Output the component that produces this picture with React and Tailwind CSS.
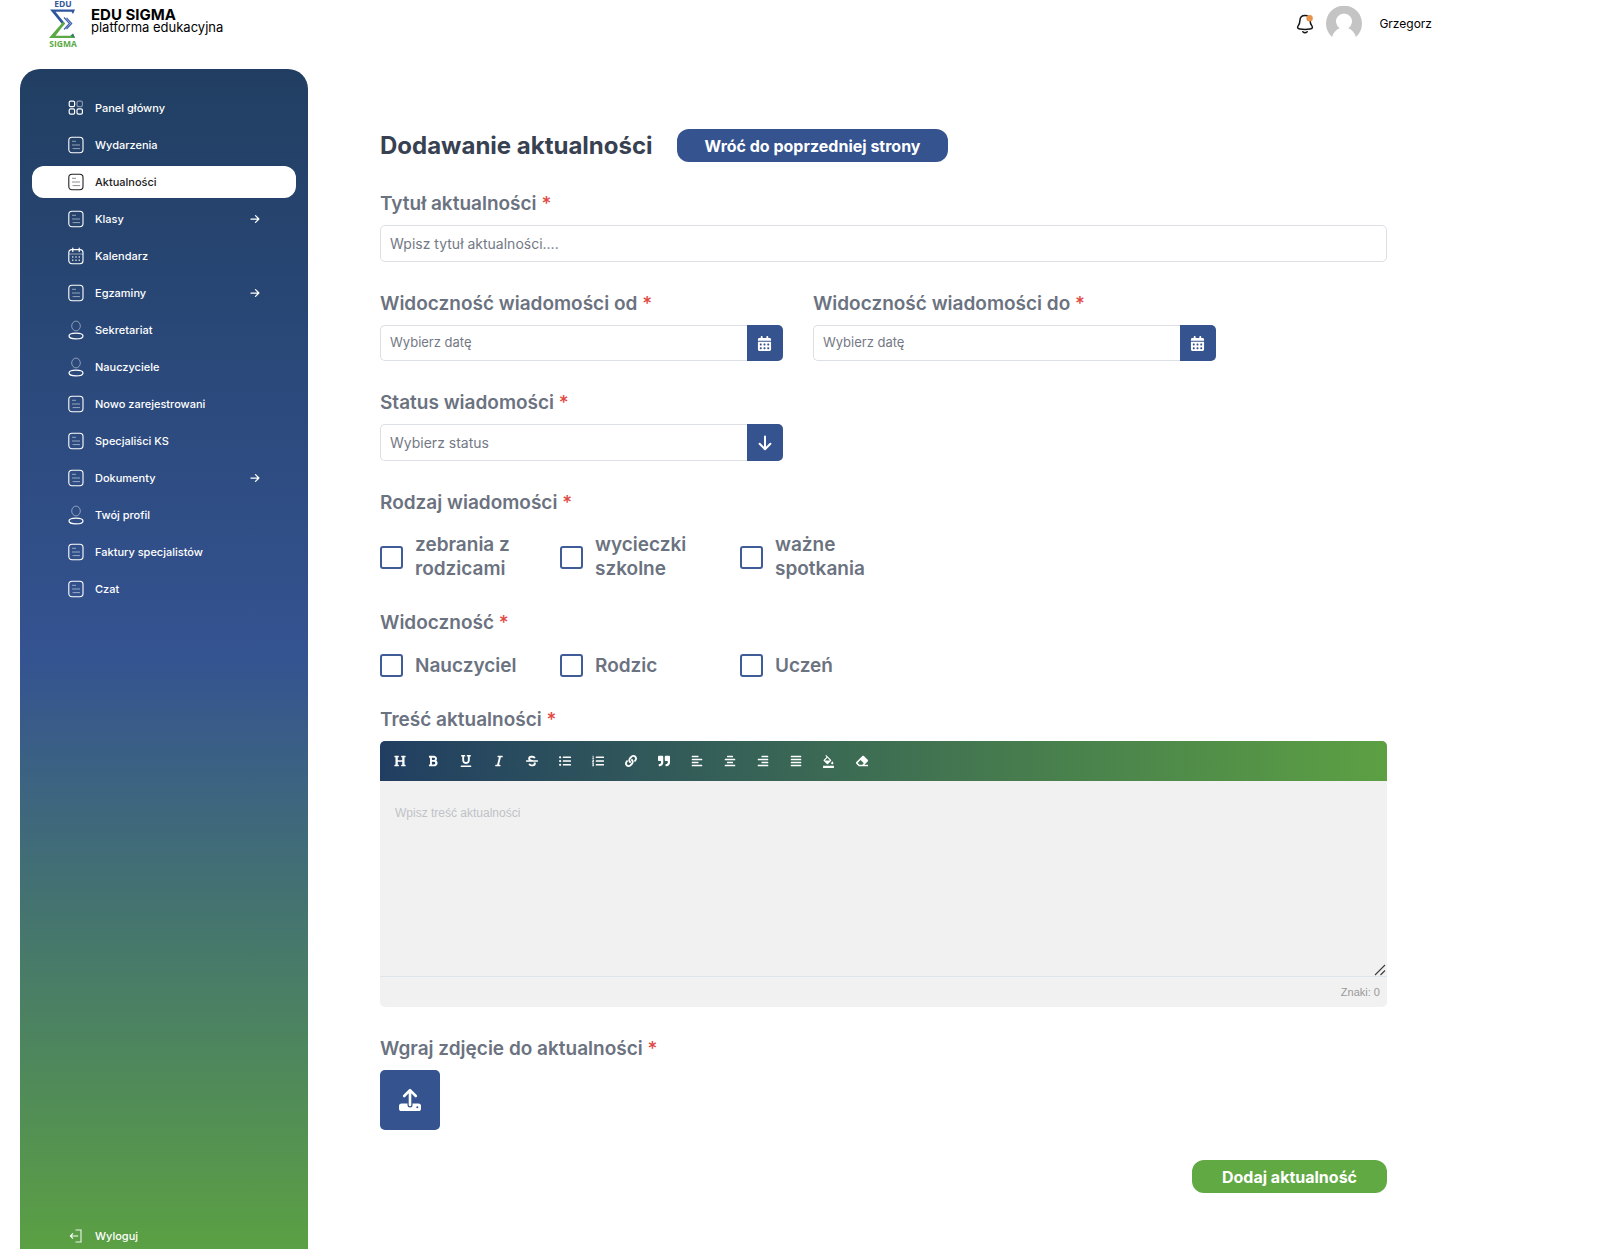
import React from "react";
import { FaCalendarDays } from "react-icons/fa6";
import {
  FaHeading,
  FaBold,
  FaUnderline,
  FaItalic,
  FaStrikethrough,
  FaListUl,
  FaListOl,
  FaLink,
  FaQuoteRight,
  FaAlignLeft,
  FaAlignCenter,
  FaAlignRight,
  FaAlignJustify,
  FaEraser,
} from "react-icons/fa";
import { MdFormatColorFill } from "react-icons/md";

function Logo() {
  return (
    <svg className="h-12 w-7 shrink-0" viewBox="0 0 28 48" aria-label="EDU SIGMA" role="img">
      <text x="14" y="6.5" textAnchor="middle" fontFamily="Open Sans, sans-serif" fontWeight="700" fontSize="8.5" fill="#34579c">EDU</text>
      <path d="M1 9.5H26L24 14 22.5 11.8H6.5L16 23.5 14.2 25.5Z" fill="#2f559f" />
      <path d="M14.2 21.8 16 23.5 6.5 35.7H22L24 33.5 26 38H0Z" fill="#5ba944" />
      <path d="M21.5 35.7 24 33.5 26 38Z" fill="#2f7f6a" />
      <path d="M15 17.5 20.5 23.5 15 29.5M17.5 17.8 22.7 23.5 17.5 29" fill="none" stroke="#3d62a8" strokeWidth="1.2" />
      <text x="14" y="46.5" textAnchor="middle" fontFamily="Open Sans, sans-serif" fontWeight="700" fontSize="8.5" fill="#5ba944">SIGMA</text>
    </svg>
  );
}

function GridIcon() {
  return (
    <svg className="size-4" viewBox="0 0 16 16" fill="none" stroke="currentColor" strokeWidth="1.2">
      <rect x="1.2" y="1.2" width="5.4" height="5.4" rx="1.4" />
      <rect x="9" y="1.2" width="5.4" height="5.4" rx="1.4" opacity="0.45" />
      <rect x="1.2" y="8.8" width="5.4" height="5.4" rx="1.4" />
      <rect x="9" y="8.8" width="5.4" height="5.4" rx="1.4" />
    </svg>
  );
}

function NoteIcon() {
  return (
    <svg className="h-[18px] w-4" viewBox="0 0 16 18" fill="none" stroke="currentColor">
      <rect x="0.8" y="1.2" width="14.2" height="15.6" rx="3.2" strokeWidth="1.1" />
      <path d="M4.4 5.3H7.6M4.4 9H11.6M5 12.6H11.6" strokeWidth="1" opacity="0.5" strokeLinecap="round" />
    </svg>
  );
}

function CalendarIcon() {
  return (
    <svg className="h-[18px] w-4" viewBox="0 0 16 18" fill="none" stroke="currentColor">
      <rect x="0.8" y="2.6" width="14.2" height="14.2" rx="3" strokeWidth="1.1" />
      <path d="M4.8 1V4.4M11.2 1V4.4" strokeWidth="1.2" strokeLinecap="round" />
      <path d="M1 7H15" strokeWidth="1" opacity="0.5" />
      <path d="M4 10H5.4M7.3 10H8.7M10.6 10H12M4 13.2H5.4M7.3 13.2H8.7M10.6 13.2H12" strokeWidth="1.4" opacity="0.75" />
    </svg>
  );
}

function UserIcon() {
  return (
    <svg className="h-5 w-4" viewBox="0 0 16 20" fill="none" stroke="currentColor">
      <ellipse cx="8" cy="6" rx="4.3" ry="4.9" strokeWidth="1" opacity="0.45" />
      <ellipse cx="8" cy="16" rx="7" ry="2.9" strokeWidth="1.2" />
    </svg>
  );
}

function LogoutIcon() {
  return (
    <svg className="size-4" viewBox="0 0 16 16" fill="none" stroke="currentColor" strokeWidth="1.1">
      <path d="M7.5 2H13V14H7.5" opacity="0.9" />
      <path d="M10.2 8H2.5M5 5.4 2.4 8 5 10.6" />
    </svg>
  );
}

function ArrowIcon({ className }) {
  return (
    <svg className={className} viewBox="0 0 16 16" fill="none" stroke="currentColor" strokeWidth="2" strokeLinecap="round" strokeLinejoin="round">
      <path d="M1.5 8H14M8.8 2.6 14.2 8 8.8 13.4" />
    </svg>
  );
}

function BellIcon() {
  return (
    <svg className="h-5 w-[18px]" viewBox="0 0 18 20" fill="none" stroke="#161616" strokeWidth="1.5" strokeLinecap="round">
      <path d="M9 1.6C5.7 1.6 4 4 3.9 6.6 3.8 9 3.6 9.8 2.4 11.4 0.9 13.4 1.5 14.8 4 15.1 7.2 15.6 10.8 15.6 14 15.1 16.5 14.8 17.1 13.4 15.6 11.4 14.4 9.8 14.2 9 14.1 6.6 14 4 12.3 1.6 9 1.6Z" />
      <path d="M6.8 17.8C8 18.9 10 18.9 11.2 17.8" />
      <circle cx="13.6" cy="4.2" r="3.2" fill="#e8924a" stroke="none" />
    </svg>
  );
}

function Avatar() {
  return (
    <svg className="size-9" viewBox="0 0 36 36" role="img" aria-label="Avatar">
      <path d="M6 31A18 18 0 1 1 30 31C28.700 26.500 25.800 23.500 22.300 22.200A8 8 0 1 0 13.700 22.200C10.200 23.500 7.300 26.500 6 31Z" fill="#c4c4c4" />
    </svg>
  );
}

function UploadIcon() {
  return (
    <svg className="size-6" viewBox="0 0 24 24" fill="none">
      <rect x="1" y="15.500" width="22" height="7.500" rx="2.600" fill="white" />
      <path d="M12 17V3" stroke="#34538f" strokeWidth="5" strokeLinecap="round" />
      <path d="M12 17V2.500M6.200 8 12 2.200 17.800 8" stroke="white" strokeWidth="2.600" strokeLinecap="round" strokeLinejoin="round" />
      <circle cx="19.300" cy="19.200" r="1" fill="#34538f" />
    </svg>
  );
}

const MENU = [
  { label: "Panel główny", Icon: GridIcon },
  { label: "Wydarzenia", Icon: NoteIcon },
  { label: "Aktualności", Icon: NoteIcon, active: true },
  { label: "Klasy", Icon: NoteIcon, more: true },
  { label: "Kalendarz", Icon: CalendarIcon },
  { label: "Egzaminy", Icon: NoteIcon, more: true },
  { label: "Sekretariat", Icon: UserIcon },
  { label: "Nauczyciele", Icon: UserIcon },
  { label: "Nowo zarejestrowani", Icon: NoteIcon },
  { label: "Specjaliści KS", Icon: NoteIcon },
  { label: "Dokumenty", Icon: NoteIcon, more: true },
  { label: "Twój profil", Icon: UserIcon },
  { label: "Faktury specjalistów", Icon: NoteIcon },
  { label: "Czat", Icon: NoteIcon },
];

const TOOLS = [
  ["Nagłówek", FaHeading],
  ["Pogrubienie", FaBold],
  ["Podkreślenie", FaUnderline],
  ["Kursywa", FaItalic],
  ["Przekreślenie", FaStrikethrough],
  ["Lista punktowana", FaListUl],
  ["Lista numerowana", FaListOl],
  ["Link", FaLink],
  ["Cytat", FaQuoteRight],
  ["Do lewej", FaAlignLeft],
  ["Do środka", FaAlignCenter],
  ["Do prawej", FaAlignRight],
  ["Wyjustuj", FaAlignJustify],
  ["Kolor tła", MdFormatColorFill],
  ["Wyczyść", FaEraser],
];

function Sidebar() {
  return (
    <aside className="flex w-[288px] shrink-0 flex-col rounded-t-[20px] bg-linear-to-b/srgb from-[#213e62] via-[#345391] to-[#5ba043] px-3 pt-[23px] text-[11px] font-medium text-white">
      <nav className="flex flex-col gap-[5px]">
        {MENU.map(({ label, Icon, active, more }) => (
          <a
            key={label}
            href="#"
            aria-current={active ? "page" : undefined}
            className={
              active
                ? "flex h-8 items-center gap-[11px] rounded-xl bg-white pr-9 pl-9 text-[#222222]"
                : "flex h-8 items-center gap-[11px] pr-9 pl-9"
            }
          >
            <Icon />
            <span>{label}</span>
            {more && <ArrowIcon className="ml-auto size-[10px]" />}
          </a>
        ))}
      </nav>
      <a href="#" className="mt-auto flex h-[26px] items-center gap-[11px] pl-9">
        <LogoutIcon />
        <span>Wyloguj</span>
      </a>
    </aside>
  );
}

const LABEL = "text-[19px] leading-7 font-semibold text-[#6b7280]";

function Required() {
  return <span className="font-medium text-[#e04a45]">*</span>;
}

function Field({ id, label, children }) {
  return (
    <div className="flex min-w-0 flex-col gap-[7px]">
      <label htmlFor={id} className={LABEL}>
        {label} <Required />
      </label>
      {children}
    </div>
  );
}

function DateField({ id, label }) {
  return (
    <Field id={id} label={label}>
      <div className="flex h-9">
        <input
          id={id}
          type="text"
          placeholder="Wybierz datę"
          className="min-w-0 flex-1 rounded-l-[5px] border border-r-0 border-[#dcdfe3] px-[9px] text-[13px] text-gray-700 placeholder:text-[#737985]"
        />
        <button type="button" aria-label="Otwórz kalendarz" className="flex w-9 items-center justify-center rounded-r-[5px] bg-[#34538f] text-white">
          <FaCalendarDays className="size-[15px]" />
        </button>
      </div>
    </Field>
  );
}

function CheckGroup({ legend, options }) {
  return (
    <fieldset>
      <legend className={LABEL}>
        {legend} <Required />
      </legend>
      <div className="mt-4 flex">
        {options.map((option) => (
          <label key={option} className="flex min-h-[25px] w-[180px] items-center gap-3 pr-10 text-[19px] leading-6 font-semibold text-[#6b7280]">
            <input type="checkbox" className="size-[23px] shrink-0 appearance-none rounded-[3px] border-2 border-[#3f5c97] bg-white checked:bg-[#34538f]" />
            <span>{option}</span>
          </label>
        ))}
      </div>
    </fieldset>
  );
}

function Editor() {
  return (
    <div className="overflow-hidden rounded-[5px] bg-[#f1f1f1] font-['Liberation_Sans',sans-serif]">
      <div className="flex h-10 items-center bg-linear-to-r/srgb from-[#213e62] to-[#5ca043] pl-[3px] text-white">
        {TOOLS.map(([name, Icon]) => (
          <button key={name} type="button" aria-label={name} className="flex h-8 w-[33px] items-center justify-center">
            <Icon className={name === "Kolor tła" ? "size-[13px]" : "size-3"} />
          </button>
        ))}
      </div>
      <div className="relative">
        <textarea
          id="content"
          placeholder="Wpisz treść aktualności"
          className="block h-[195px] w-full resize-none px-[15px] pt-6 text-xs text-gray-700 placeholder:text-[#bfc2c7]"
        />
        <svg className="pointer-events-none absolute right-px bottom-0 size-3" viewBox="0 0 12 12" stroke="#3c3c3c" strokeWidth="1.1" aria-hidden="true">
          <path d="M1 11 11 1M6.500 11 11 6.500" />
        </svg>
      </div>
      <div className="flex h-[31px] items-center justify-end border-t border-[#dde4ec] pr-[7px] text-[11px] text-[#999999]">Znaki: 0</div>
    </div>
  );
}

export default function App() {
  return (
    <div className="flex min-h-screen flex-col bg-white font-['Inter',sans-serif] text-black">
      <header className="flex h-[69px] items-start justify-between pr-[168px] pl-[49px]">
        <div className="flex gap-[14px]">
          <Logo />
          <div className="flex flex-col pt-2 text-[13px] leading-[13px]">
            <span className="text-[15px] font-bold">EDU SIGMA</span>
            <span>platforma edukacyjna</span>
          </div>
        </div>
        <div className="flex items-center pt-[6px]">
          <button type="button" aria-label="Powiadomienia">
            <BellIcon />
          </button>
          <span className="ml-3">
            <Avatar />
          </span>
          <span className="ml-[17px] text-xs">Grzegorz</span>
        </div>
      </header>

      <div className="flex flex-1 pl-5">
        <Sidebar />
        <main className="min-w-0 flex-1 pt-[60px] pr-[213px] pl-[72px]">
          <form className="flex flex-col gap-7">
            <div className="flex items-center gap-6">
              <h1 className="text-2xl leading-[33px] font-bold text-[#374151]">Dodawanie aktualności</h1>
              <button type="button" className="h-[33px] rounded-xl bg-[#34538f] px-7 text-base font-bold text-white">
                Wróć do poprzedniej strony
              </button>
            </div>

            <Field id="title" label="Tytuł aktualności">
              <input
                id="title"
                type="text"
                placeholder="Wpisz tytuł aktualności...."
                className="h-[37px] rounded-[5px] border border-[#dcdfe3] px-[9px] text-sm text-gray-700 placeholder:text-[#737985]"
              />
            </Field>

            <div className="grid w-[83%] grid-cols-2 gap-[30px]">
              <DateField id="from" label="Widoczność wiadomości od" />
              <DateField id="to" label="Widoczność wiadomości do" />
            </div>

            <div className="grid w-[83%] grid-cols-2 gap-[30px]">
              <Field id="status" label="Status wiadomości">
                <div className="flex h-[37px]">
                  <select id="status" defaultValue="" className="min-w-0 flex-1 appearance-none rounded-l-[5px] border border-r-0 border-[#dcdfe3] px-[9px] text-sm text-[#737985]">
                    <option value="">Wybierz status</option>
                  </select>
                  <button type="button" aria-label="Rozwiń statusy" className="flex w-9 items-center justify-center rounded-r-[5px] bg-[#34538f] text-white">
                    <ArrowIcon className="size-4 rotate-90" />
                  </button>
                </div>
              </Field>
            </div>

            <CheckGroup legend="Rodzaj wiadomości" options={["zebrania z rodzicami", "wycieczki szkolne", "ważne spotkania"]} />
            <CheckGroup legend="Widoczność" options={["Nauczyciel", "Rodzic", "Uczeń"]} />

            <Field id="content" label="Treść aktualności">
              <Editor />
            </Field>

            <Field id="photo" label="Wgraj zdjęcie do aktualności">
              <button id="photo" type="button" aria-label="Wgraj zdjęcie" className="flex size-[60px] items-center justify-center rounded-[5px] bg-[#34538f]">
                <UploadIcon />
              </button>
            </Field>

            <button type="submit" className="mt-0.5 h-[33px] self-end rounded-xl bg-[#61a942] px-[30px] text-base font-bold text-white">
              Dodaj aktualność
            </button>
          </form>
        </main>
      </div>
    </div>
  );
}
